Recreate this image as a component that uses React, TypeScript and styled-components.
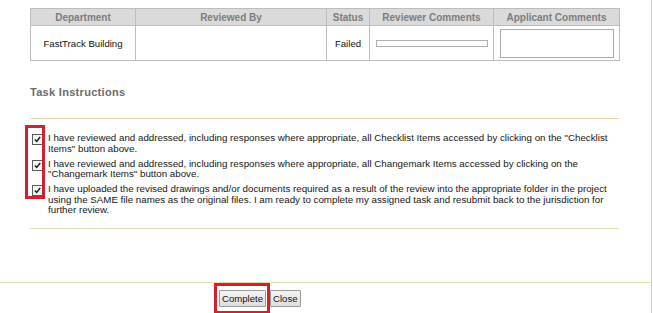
import React from 'react';
import styled, { createGlobalStyle } from 'styled-components';

const GlobalStyle = createGlobalStyle`
  html, body {
    margin: 0;
    padding: 0;
    background: #ffffff;
  }
  body {
    font-family: 'Liberation Sans', Arial, sans-serif;
    color: #111111;
  }
`;

const COLORS = {
  rule: '#e4dcaa',
  tableBorder: '#bdbdbd',
  headerBg: '#dadada',
  headerText: '#7d7d7d',
  highlight: '#d4202c',
};

const StyledPage = styled.div`
  width: 651px;
  height: 313px;
  border-right: 1px solid #d2d2d2;
  display: flex;
  flex-direction: column;
  overflow: hidden;
`;

const StyledContent = styled.div`
  padding: 8px 32px 0 30px;
  display: flex;
  flex-direction: column;
`;

const StyledTable = styled.table`
  width: 590px;
  border-collapse: collapse;
  table-layout: fixed;
  font-size: 9.6px;
`;

const StyledTh = styled.th`
  height: 16px;
  padding: 0;
  background: ${COLORS.headerBg};
  color: ${COLORS.headerText};
  font-size: 10px;
  font-weight: bold;
  border: 1px solid ${COLORS.tableBorder};
  text-align: center;
`;

const StyledTd = styled.td<{ $align?: 'left' | 'center' }>`
  height: 34px;
  padding: 0 ${({ $align }) => ($align === 'left' ? '6px' : '0')};
  border: 1px solid ${COLORS.tableBorder};
  text-align: ${({ $align }) => $align ?? 'center'};
  vertical-align: middle;
`;

const StyledCommentBar = styled.div`
  width: 110px;
  height: 5px;
  border: 1px solid #b0b0b0;
  background: #fdfdfd;
`;

const StyledCommentBox = styled.div`
  width: 112px;
  height: 27px;
  border: 1px solid #aaaaaa;
  background: #ffffff;
`;

const StyledSectionTitle = styled.h3`
  margin: 25px 0 0;
  font-size: 11px;
  line-height: 13px;
  font-weight: bold;
  letter-spacing: 0.3px;
  color: #6b6b6b;
`;

const StyledRule = styled.hr<{ $gap: number }>`
  width: 589px;
  margin: ${({ $gap }) => $gap}px 0 0;
  border: 0;
  border-top: 1px solid ${COLORS.rule};
`;

const StyledChecklist = styled.div`
  position: relative;
  display: flex;
  flex-direction: column;
  gap: 4.5px;
  padding: 14px 7px 0 0;
`;

const StyledItem = styled.label`
  display: flex;
  align-items: flex-start;
  gap: 5px;
  padding-left: 2px;
  font-size: 9.75px;
  line-height: 10.5px;
  color: #161616;
`;

const StyledCheckbox = styled.span`
  flex: none;
  width: 9px;
  height: 9px;
  margin-top: 1px;
  border: 1px solid #5a5a5a;
  background: #f6f6f6;
  display: flex;
  align-items: center;
  justify-content: center;
`;

const StyledHighlight = styled.span`
  position: absolute;
  left: -5px;
  top: 6px;
  width: 14px;
  height: 68px;
  border: 3.5px solid ${COLORS.highlight};
  pointer-events: none;
`;

const StyledFooter = styled.div`
  margin-top: 53px;
  border-top: 1px solid ${COLORS.rule};
  display: flex;
  align-items: flex-start;
  padding-left: 214px;
`;

const StyledButtonFrame = styled.span<{ $highlighted?: boolean }>`
  display: inline-flex;
  padding: ${({ $highlighted }) => ($highlighted ? '4px 1px 4px 2px' : '7px 0 0 0')};
  border: ${({ $highlighted }) => ($highlighted ? `3px solid ${COLORS.highlight}` : '0')};
`;

const StyledButton = styled.button`
  height: 17px;
  padding: 0 2px;
  font-family: 'Liberation Sans', Arial, sans-serif;
  font-size: 9.6px;
  color: #111111;
  background: linear-gradient(#f4f4f4, #dedede);
  border: 1px solid #9a9a9a;
  border-radius: 1px;
  cursor: pointer;
`;

const CheckMark = () => (
  <svg width='7' height='7' viewBox='0 0 7 7'>
    <path d='M0.8 3.6 L2.7 5.5 L6.2 1' fill='none' stroke='#1a1a1a' strokeWidth='1.4' />
  </svg>
);

const INSTRUCTIONS = [
  'I have reviewed and addressed, including responses where appropriate, all Checklist Items accessed by clicking on the "Checklist Items" button above.',
  'I have reviewed and addressed, including responses where appropriate, all Changemark Items accessed by clicking on the "Changemark Items" button above.',
  'I have uploaded the revised drawings and/or documents required as a result of the review into the appropriate folder in the project using the SAME file names as the original files. I am ready to complete my assigned task and resubmit back to the jurisdiction for further review.',
];

const App: React.FC = () => (
  <>
    <GlobalStyle />
    <StyledPage>
      <StyledContent>
        <StyledTable>
          <colgroup>
            <col style={{ width: 105 }} />
            <col style={{ width: 191 }} />
            <col style={{ width: 43 }} />
            <col style={{ width: 124 }} />
            <col style={{ width: 126 }} />
          </colgroup>
          <thead>
            <tr>
              <StyledTh>Department</StyledTh>
              <StyledTh>Reviewed By</StyledTh>
              <StyledTh>Status</StyledTh>
              <StyledTh>Reviewer Comments</StyledTh>
              <StyledTh>Applicant Comments</StyledTh>
            </tr>
          </thead>
          <tbody>
            <tr>
              <StyledTd>FastTrack Building</StyledTd>
              <StyledTd />
              <StyledTd>Failed</StyledTd>
              <StyledTd $align='left'>
                <StyledCommentBar />
              </StyledTd>
              <StyledTd $align='left'>
                <StyledCommentBox />
              </StyledTd>
            </tr>
          </tbody>
        </StyledTable>

        <StyledSectionTitle>Task Instructions</StyledSectionTitle>
        <StyledRule $gap={19} />

        <StyledChecklist>
          {INSTRUCTIONS.map((text) => (
            <StyledItem key={text}>
              <StyledCheckbox>
                <CheckMark />
              </StyledCheckbox>
              <span>{text}</span>
            </StyledItem>
          ))}
          <StyledHighlight />
        </StyledChecklist>

        <StyledRule $gap={12} />
      </StyledContent>

      <StyledFooter>
        <StyledButtonFrame $highlighted>
          <StyledButton type='button'>Complete</StyledButton>
        </StyledButtonFrame>
        <StyledButtonFrame>
          <StyledButton type='button'>Close</StyledButton>
        </StyledButtonFrame>
      </StyledFooter>
    </StyledPage>
  </>
);

export default App;
